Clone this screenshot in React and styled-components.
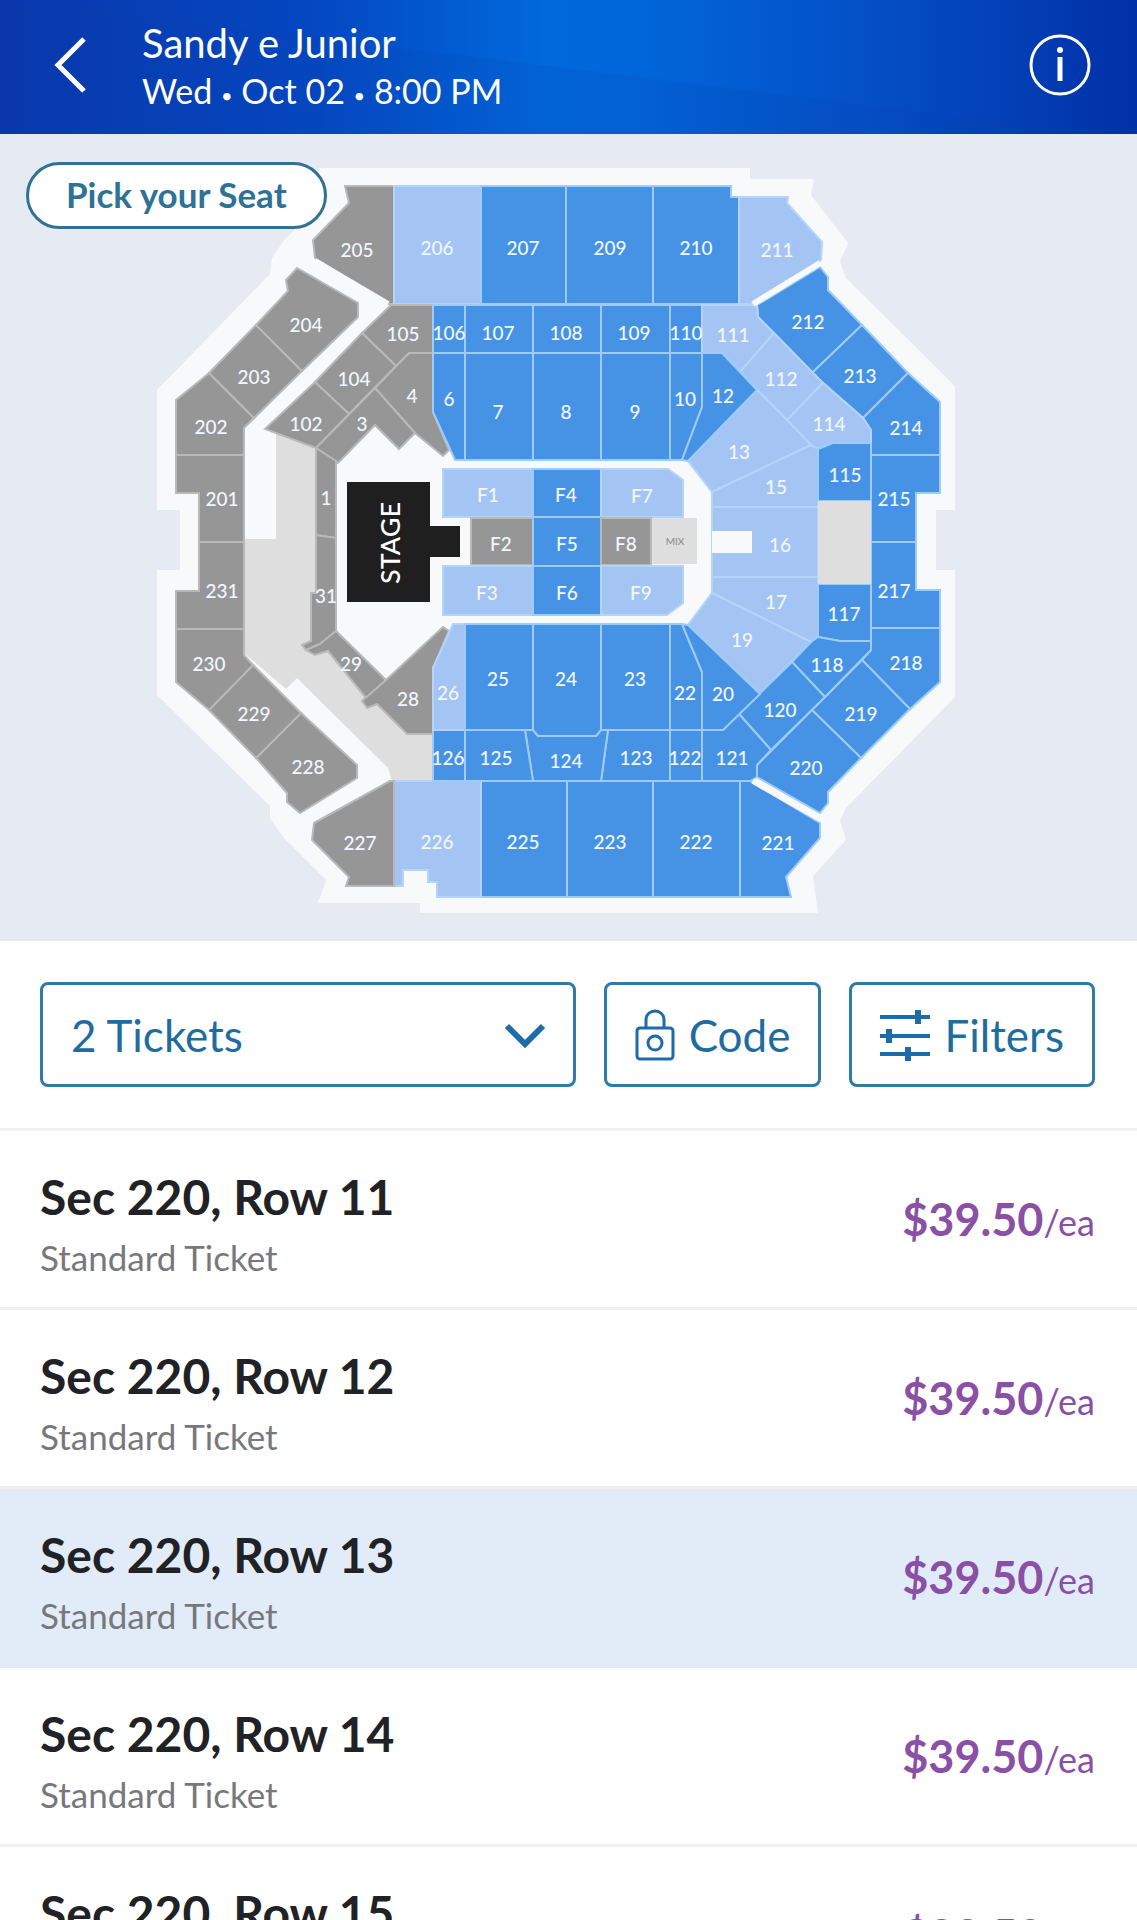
import { useState } from "react";
import styled, { createGlobalStyle } from "styled-components";

const fills = {
  open: "#4693e6",
  few: "#a4c5f4",
  none: "#969696",
  closed: "#dedede",
};

const outlines = {
  open: "#9dcbfa",
  few: "#b4d4fa",
  none: "#b9b9b9",
};

// [label, availability, label x, label y, outline]
const sections = [
  ["205", "none", 357, 249, "345,186 394,186 394,304 388,304 315,258 313,240 349,203"],
  ["206", "few", 437, 247, "394,186 481,186 481,304 394,304"],
  ["207", "open", 523, 247, "481,186 566,186 566,304 481,304"],
  ["209", "open", 610, 247, "566,186 653,186 653,304 566,304"],
  ["210", "open", 696, 247, "653,186 731,186 731,197 739,197 739,304 653,304"],
  ["211", "few", 777, 249, "739,197 788,197 787,203 822,242 821,260 750,304 739,304"],
  ["212", "open", 808, 321, "757,305 820,267 828,277 828,290 862,325 812,373 758,317"],
  ["213", "open", 860, 375, "862,325 908,373 863,418 812,373"],
  ["214", "open", 906, 427, "908,373 940,402 940,455 871,455 871,430 863,418"],
  ["215", "open", 894, 498, "871,455 940,455 940,493 916,493 916,542 871,542"],
  ["217", "open", 894, 590, "871,542 916,542 916,590 940,590 940,628 871,628"],
  ["218", "open", 906, 662, "871,628 940,628 940,682 910,709 862,660 871,650"],
  ["219", "open", 861, 713, "862,660 910,709 861,758 812,710"],
  ["220", "open", 806, 767, "812,710 861,758 828,792 828,803 820,813 757,777 757,765"],
  ["221", "open", 778, 842, "740,781 750,781 820,823 820,838 786,877 791,897 740,897"],
  ["222", "open", 696, 841, "653,781 740,781 740,897 653,897"],
  ["223", "open", 610, 841, "567,781 653,781 653,897 567,897"],
  ["225", "open", 523, 841, "481,781 567,781 567,897 481,897"],
  ["226", "few", 437, 841, "394,781 481,781 481,897 437,897 437,882 428,882 428,870 403,870 403,886 394,886"],
  ["227", "none", 360, 842, "390,781 394,781 394,886 346,886 349,877 312,840 314,823"],
  ["228", "none", 308, 766, "301,713 357,765 357,778 300,813 287,802 287,793 256,758"],
  ["229", "none", 254, 713, "253,665 301,713 256,758 209,710"],
  ["230", "none", 209, 663, "176,629 244,629 244,655 253,665 209,710 176,682"],
  ["231", "none", 222, 590, "199,542 244,542 244,629 176,629 176,591 199,591"],
  ["201", "none", 222, 498, "176,455 244,455 244,542 199,542 199,493 176,493"],
  ["202", "none", 211, 426, "176,400 209,373 254,418 244,428 244,455 176,455"],
  ["203", "none", 254, 376, "209,373 256,325 302,371 254,418"],
  ["204", "none", 306, 324, "256,325 288,291 286,280 297,268 358,303 358,317 302,371"],
  ["105", "none", 403, 333, "362,333 391,305 433,305 433,353 409,353 396,366"],
  ["104", "none", 354, 378, "315,382 362,333 396,366 349,414"],
  ["102", "none", 306, 423, "265,429 315,382 349,414 316,448"],
  ["4", "none", 412, 395, "409,353 433,353 433,412 449,450 443,456 415,433 375,388"],
  ["3", "none", 362, 423, "375,388 415,433 399,449 375,425 338,463 316,448"],
  ["1", "none", 326, 497, "316,448 336,461 336,538 316,535"],
  ["31", "none", 326, 595, "316,535 336,538 336,631 320,644 306,650 302,645 311,641 311,593 316,593"],
  ["29", "none", 351, 663, "336,631 386,680 366,698 328,651 315,655 306,650 320,644"],
  ["28", "none", 408, 698, "386,680 443,627 449,631 433,668 433,734 407,734 377,704 367,708 362,701"],
  ["106", "open", 449, 332, "433,305 465,305 465,353 433,353"],
  ["107", "open", 498, 332, "465,305 533,305 533,353 465,353"],
  ["108", "open", 566, 332, "533,305 601,305 601,353 533,353"],
  ["109", "open", 634, 332, "601,305 670,305 670,353 601,353"],
  ["110", "open", 686, 332, "670,305 702,305 702,353 670,353"],
  ["111", "few", 733, 334, "702,305 757,305 758,317 774,333 740,372 722,353 702,353"],
  ["112", "few", 781, 378, "774,333 823,383 787,420 740,372"],
  ["114", "few", 829, 423, "823,383 863,418 871,430 871,443 833,443 818,449 811,445 787,420"],
  ["6", "open", 449, 398, "433,353 465,353 465,460 455,460 433,412"],
  ["7", "open", 498, 411, "465,353 533,353 533,460 465,460"],
  ["8", "open", 566, 411, "533,353 601,353 601,460 533,460"],
  ["9", "open", 635, 411, "601,353 670,353 670,460 601,460"],
  ["10", "open", 685, 398, "670,353 702,353 702,407 682,460 670,460"],
  ["13", "few", 739, 451, "757,390 787,420 811,445 712,492 688,461"],
  ["12", "open", 723, 395, "702,353 722,353 757,390 688,461 682,460 702,407"],
  ["15", "few", 776, 486, "811,445 818,449 818,507 712,507 712,492"],
  ["16", "few", 780, 544, "712,507 818,507 818,577 712,577"],
  ["17", "few", 776, 601, "712,577 818,577 818,637 811,642 712,593"],
  ["19", "few", 742, 639, "712,593 811,642 760,694 688,625"],
  ["115", "open", 845, 474, "818,449 833,443 871,443 871,501 818,501"],
  ["117", "open", 844, 613, "818,584 871,584 871,641 840,641 818,637"],
  ["118", "open", 827, 664, "811,642 818,637 840,641 871,641 871,650 825,697 792,662"],
  ["120", "open", 780, 709, "792,662 825,697 771,750 739,714"],
  ["121", "open", 732, 757, "739,714 771,750 757,765 757,777 750,781 702,781 702,730 723,730"],
  ["122", "open", 685, 757, "670,730 702,730 702,781 670,781"],
  ["123", "open", 636, 757, "608,730 670,730 670,781 601,781"],
  ["124", "open", 566, 760, "525,730 533,730 538,736 596,736 601,730 608,730 601,781 533,781"],
  ["125", "open", 496, 757, "465,730 525,730 533,781 465,781"],
  ["126", "open", 448, 757, "433,730 465,730 465,781 433,781"],
  ["26", "few", 448, 692, "453,624 465,624 465,730 433,730 433,668"],
  ["25", "open", 498, 678, "465,624 533,624 533,730 465,730"],
  ["24", "open", 566, 678, "533,624 601,624 601,730 596,736 538,736 533,730"],
  ["23", "open", 635, 678, "601,624 670,624 670,730 601,730"],
  ["22", "open", 685, 692, "670,624 682,624 702,672 702,730 670,730"],
  ["20", "open", 723, 693, "682,624 688,625 760,694 723,730 702,730 702,672"],
  ["F1", "few", 488, 494, "443,469 533,469 533,517 443,517"],
  ["F4", "open", 566, 494, "533,469 601,469 601,517 533,517"],
  ["F7", "few", 642, 495, "601,469 668,469 683,480 683,517 601,517"],
  ["F2", "none", 501, 543, "471,518 533,518 533,565 471,565"],
  ["F5", "open", 567, 543, "533,517 601,517 601,566 533,566"],
  ["F8", "none", 626, 543, "601,518 651,518 651,565 601,565"],
  ["F3", "few", 487, 592, "443,566 533,566 533,615 443,615"],
  ["F6", "open", 567, 592, "533,566 601,566 601,615 533,615"],
  ["F9", "few", 641, 592, "601,566 683,566 683,603 667,615 601,615"],
];

const tickets = [
  { section: 220, row: 11 },
  { section: 220, row: 12 },
  { section: 220, row: 13 },
  { section: 220, row: 14 },
  { section: 220, row: 15 },
];

const SeatMap = () => (
  <Map viewBox="0 134 1137 807" role="img" aria-label="Seat map">
    <Walls points="318,168 750,168 750,179 814,179 811,195 848,243 840,262 846,278 955,386 955,510 936,510 936,570 955,570 955,697 846,808 840,820 846,840 813,876 818,913 420,913 420,903 318,903 326,880 283,837 270,818 270,806 157,695 157,570 180,570 180,510 157,510 157,390 270,274 272,258 284,240 325,200" />
    <ClosedArea points="276,432 320,448 320,640 350,660 410,730 433,733 433,781 392,781 388,768 297,678 286,689 244,653 244,539 276,539" />
    {sections.map(([label, status, , , points]) => (
      <Section key={label} $status={status} points={points} />
    ))}
    <ClosedArea points="818,501 871,501 871,584 818,584" />
    <ClosedArea points="652,518 697,518 697,564 652,564" />
    <Walls points="712,531 752,531 752,553 712,553" />
    <Aisle d="M388 304L315 261M753 304L820 263M753 781L820 819" />
    <Stage points="347,482 430,482 430,526 460,526 460,557 430,557 430,602 347,602" />
    {sections.map(([label, , x, y]) => (
      <SectionLabel key={label} x={x} y={y}>
        {label}
      </SectionLabel>
    ))}
    <MixLabel x="675" y="541">
      MIX
    </MixLabel>
    <StageLabel transform="translate(389 543) rotate(-90)">STAGE</StageLabel>
  </Map>
);

const TicketRow = ({ section, row, selected, onSelect }) => (
  <Row $selected={selected} aria-pressed={selected} onClick={onSelect}>
    <Details>
      <Seat>
        Sec {section}, Row {row}
      </Seat>
      <Kind>Standard Ticket</Kind>
    </Details>
    <Price>
      $39.50<Each>/ea</Each>
    </Price>
  </Row>
);

const App = () => {
  const [count, setCount] = useState("2");
  const [selectedRow, setSelectedRow] = useState(13);

  return (
    <Screen>
      <GlobalStyle />
      <Header>
        <IconButton aria-label="Back">
          <svg width="34" height="60" viewBox="0 0 34 60" fill="none">
            <path d="M32 4L6 30L32 56" stroke="#fff" strokeWidth="5" />
          </svg>
        </IconButton>
        <Event>
          <EventName>Sandy e Junior</EventName>
          <EventDate>
            Wed <Dot>•</Dot> Oct 02 <Dot>•</Dot> 8:00 PM
          </EventDate>
        </Event>
        <IconButton aria-label="Event info">
          <svg width="64" height="64" viewBox="0 0 64 64" fill="none">
            <circle cx="32" cy="32" r="29" stroke="#fff" strokeWidth="3" />
            <circle cx="32" cy="17" r="3" fill="#fff" />
            <path d="M32 24V48" stroke="#fff" strokeWidth="5" />
          </svg>
        </IconButton>
      </Header>
      <MapPanel>
        <SeatMap />
        <PickButton>Pick your Seat</PickButton>
      </MapPanel>
      <Toolbar>
        <SelectBox>
          <Select
            aria-label="Number of tickets"
            value={count}
            onChange={(e) => setCount(e.target.value)}
          >
            <option value="1">1 Ticket</option>
            <option value="2">2 Tickets</option>
            <option value="3">3 Tickets</option>
            <option value="4">4 Tickets</option>
          </Select>
          <Chevron width="42" height="28" viewBox="0 0 42 28" fill="none">
            <path d="M3 4L21 22L39 4" stroke="#1c6bab" strokeWidth="6" />
          </Chevron>
        </SelectBox>
        <ToolButton>
          <svg width="40" height="52" viewBox="0 0 40 52" fill="none" stroke="#1c6bab" strokeWidth="3">
            <path d="M11 19V11C11 -1 29 -1 29 11V19" />
            <rect x="2" y="19" width="36" height="31" rx="3" />
            <circle cx="20" cy="34" r="7" />
          </svg>
          Code
        </ToolButton>
        <ToolButton>
          <svg width="50" height="52" viewBox="0 0 50 52" fill="none" stroke="#1c6bab">
            <path d="M0 8H50M0 27H50M0 45H50" strokeWidth="4" />
            <path d="M38 1V15M9 20V34M28 38V52" strokeWidth="6" />
          </svg>
          Filters
        </ToolButton>
      </Toolbar>
      <List>
        {tickets.map((ticket) => (
          <li key={ticket.row}>
            <TicketRow
              {...ticket}
              selected={ticket.row === selectedRow}
              onSelect={() => setSelectedRow(ticket.row)}
            />
          </li>
        ))}
      </List>
    </Screen>
  );
};

export default App;

const GlobalStyle = createGlobalStyle`
  * {
    box-sizing: border-box;
  }
  body {
    margin: 0;
    background: #fff;
    font-family: Lato, "Liberation Sans", sans-serif;
  }
  button, select {
    font-family: inherit;
    cursor: pointer;
  }
`;

const Screen = styled.div`
  height: 100vh;
  display: flex;
  flex-direction: column;
  overflow: hidden;
`;

const Header = styled.header`
  flex: none;
  display: flex;
  align-items: center;
  padding: 14px 45px 19px 52px;
  color: #fff;
  background:
    linear-gradient(187deg, transparent 50%, rgba(10, 60, 170, 0.15) 51%),
    linear-gradient(
      90deg,
      #0a37ac 0%,
      #0448c2 28%,
      #0069dc 48%,
      #0067da 56%,
      #0450c6 76%,
      #0230a8 100%
    );
`;

const IconButton = styled.button`
  display: flex;
  padding: 0;
  border: none;
  background: none;
`;

const Event = styled.div`
  flex: 1;
  padding: 6px 0 0 56px;
`;

const EventName = styled.h1`
  margin: 0;
  font-size: 40px;
  font-weight: 400;
  line-height: 47px;
`;

const EventDate = styled.p`
  margin: 0;
  font-size: 34px;
  line-height: 48px;
`;

const Dot = styled.span`
  font-size: 20px;
  line-height: 1;
  vertical-align: middle;
`;

const MapPanel = styled.section`
  position: relative;
  flex: none;
  background: #e5eaf3;
`;

const Map = styled.svg`
  display: block;
  width: 100%;
`;

const Walls = styled.polygon`
  fill: #f8f9fa;
`;

const ClosedArea = styled.polygon`
  fill: ${fills.closed};
`;

const Section = styled.polygon`
  fill: ${(props) => fills[props.$status]};
  stroke: ${(props) => outlines[props.$status]};
  stroke-width: 2;
`;

const Aisle = styled.path`
  stroke: #f8f9fa;
  stroke-width: 6;
`;

const Stage = styled.polygon`
  fill: #1f1f1f;
`;

const SectionLabel = styled.text`
  fill: #f1f7fd;
  font-size: 19px;
  font-weight: 500;
  text-anchor: middle;
  dominant-baseline: central;
`;

const MixLabel = styled(SectionLabel)`
  fill: #8f8f8f;
  font-size: 10px;
`;

const StageLabel = styled(SectionLabel)`
  fill: #fff;
  font-size: 27px;
`;

const PickButton = styled.button`
  position: absolute;
  top: 28px;
  left: 26px;
  height: 67px;
  padding: 0 37px 4px;
  border: 3px solid #2e7297;
  border-radius: 34px;
  background: #fff;
  color: #2e7297;
  font-size: 35px;
  font-weight: 700;
`;

const Toolbar = styled.div`
  flex: none;
  display: flex;
  gap: 28px;
  padding: 41px 42px 41px 40px;
  border-bottom: 3px solid #f0f0f1;
`;

const SelectBox = styled.div`
  position: relative;
  flex: 1;
`;

const Select = styled.select`
  appearance: none;
  width: 100%;
  height: 105px;
  padding: 0 28px;
  border: 3px solid #2e7aab;
  border-radius: 8px;
  background: #fff;
  color: #1f6ca0;
  font-size: 44px;
`;

const Chevron = styled.svg`
  position: absolute;
  top: 40px;
  right: 30px;
  pointer-events: none;
`;

const ToolButton = styled.button`
  display: flex;
  align-items: center;
  gap: 14px;
  height: 105px;
  padding: 0 28px;
  border: 3px solid #2e7aab;
  border-radius: 8px;
  background: #fff;
  color: #1f6ca0;
  font-size: 44px;
`;

const List = styled.ul`
  flex: 1;
  min-height: 0;
  margin: 0;
  padding: 0;
  list-style: none;
  overflow-y: auto;
  scrollbar-width: none;
`;

const Row = styled.button`
  display: flex;
  justify-content: space-between;
  align-items: center;
  width: 100%;
  height: 179px;
  padding: 0 42px 0 40px;
  border: none;
  border-bottom: 3px solid ${(props) => (props.$selected ? "#e4eaf4" : "#f0f0f1")};
  background: ${(props) => (props.$selected ? "#e2ecf8" : "#fff")};
  text-align: left;
`;

const Details = styled.div`
  padding-top: 12px;
`;

const Seat = styled.div`
  color: #212225;
  font-size: 48px;
  font-weight: 700;
  line-height: 64px;
`;

const Kind = styled.div`
  color: #77787b;
  font-size: 35px;
  line-height: 56px;
`;

const Price = styled.div`
  color: #8a50a5;
  font-size: 45px;
  font-weight: 700;
`;

const Each = styled.span`
  font-size: 36px;
  font-weight: 400;
`;
